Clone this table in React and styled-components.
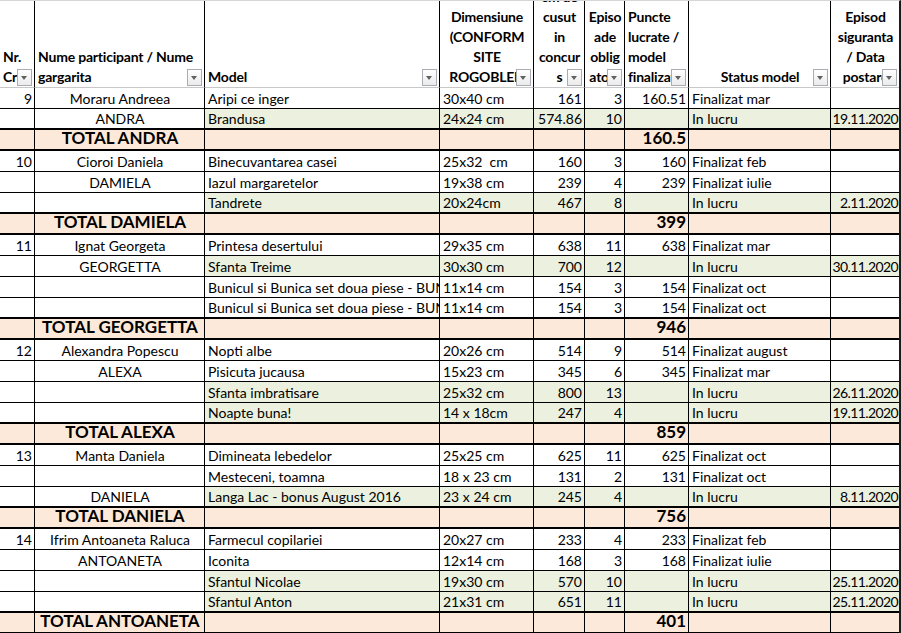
import React from 'react';
import styled, { createGlobalStyle } from 'styled-components';

const GREEN = '#ebf1de';
const PEACH = '#fde9d9';

const GlobalStyle = createGlobalStyle`
  body {
    margin: 0;
    background: #fff;
    font-family: Lato, "Liberation Sans", sans-serif;
    color: #000;
  }
`;

const Sheet = styled.div`
  width: 899px;
  border-top: 1px solid #d6d6d6;
  border-right: 2px solid #1c1c1c;
  overflow: hidden;
`;

const Table = styled.table`
  table-layout: fixed;
  border-collapse: separate;
  border-spacing: 0;
  width: 899px;
`;

const HeadCell = styled.th`
  position: relative;
  width: ${p => p.$w}px;
  box-sizing: border-box;
  padding: 0;
  border-right: ${p => (p.$last ? 'none' : '1px solid #000')};
  border-bottom: 1px solid #c8c8c8;
  vertical-align: bottom;
  font-weight: 700;
`;

const HeadBox = styled.div`
  height: 86px;
  overflow: hidden;
  display: flex;
  flex-direction: column;
  justify-content: flex-end;
  padding: 0 2px 0 3px;
  font-size: 14px;
  line-height: 20px;
  text-align: ${p => p.$align};
`;

const HeadLine = styled.span`
  display: block;
  white-space: nowrap;
  letter-spacing: -0.2px;
`;

const FilterButton = styled.span`
  position: absolute;
  right: 2px;
  bottom: 1px;
  width: 15px;
  height: 17px;
  box-sizing: border-box;
  border: 1px solid #a9adb3;
  background: linear-gradient(#ffffff, #ebebeb);

  &::after {
    content: '';
    position: absolute;
    left: 3px;
    top: 6px;
    border-left: 3.5px solid transparent;
    border-right: 3.5px solid transparent;
    border-top: 4px solid #606060;
  }
`;

const Cell = styled.td`
  padding: 0;
  box-sizing: border-box;
  border-right: ${p => (p.$last ? 'none' : '1px solid #000')};
  border-bottom: ${p => (p.$thick ? 2 : 1)}px solid #000;
  background: ${p => p.$fill || '#fff'};
  vertical-align: top;
`;

const CellBox = styled.div`
  height: ${p => p.$h}px;
  line-height: ${p => p.$h + 1}px;
  overflow: hidden;
  white-space: pre;
  padding: ${p => (p.$tight ? '0 1px 0 0' : '0 2px 0 3px')};
  font-size: 14px;
  letter-spacing: ${p => (p.$tight ? '-0.6px' : 'normal')};
  text-align: ${p => p.$align};
`;

const TotalBox = styled.div`
  height: 19px;
  line-height: 15px;
  white-space: nowrap;
  padding: 0 2px 0 3px;
  font-size: 17px;
  font-weight: 700;
  text-align: ${p => p.$align};
`;

const columns = [
  { w: 35, head: 'left', body: 'right', lines: ['Nr.', 'Crt.'] },
  { w: 170, head: 'left', body: 'center', lines: ['Nume participant / Nume', 'gargarita'] },
  { w: 235, head: 'left', body: 'left', lines: ['Model'] },
  { w: 94, head: 'center', body: 'left', lines: ['Dimensiune', '(CONFORM', 'SITE', 'ROGOBLEN'] },
  { w: 51, head: 'center', body: 'right', lines: ['cm de', 'cusut', 'in', 'concur', 's'] },
  { w: 40, head: 'center', body: 'right', lines: ['Episo', 'ade', 'oblig', 'atorii'] },
  { w: 64, head: 'left', body: 'right', lines: ['Puncte', 'lucrate /', 'model', 'finalizat'] },
  { w: 142, head: 'center', body: 'left', lines: ['Status model'] },
  { w: 68, head: 'center', body: 'right', tight: true, lines: ['Episod', 'siguranta', '/ Data', 'postare'] },
];

const BUNICI = 'Bunicul si Bunica set doua piese - BUNICUTII';

// [nr, nume, model, dimensiune, cm, episoade, puncte, status, data, in lucru]
const sections = [
  {
    label: 'TOTAL ANDRA',
    points: '160.5',
    rows: [
      ['9', 'Moraru Andreea', 'Aripi ce inger', '30x40 cm', '161', '3', '160.51', 'Finalizat mar', ''],
      ['', 'ANDRA', 'Brandusa', '24x24 cm', '574.86', '10', '', 'In lucru', '19.11.2020', true],
    ],
  },
  {
    label: 'TOTAL DAMIELA',
    points: '399',
    rows: [
      ['10', 'Cioroi Daniela', 'Binecuvantarea casei', '25x32  cm', '160', '3', '160', 'Finalizat feb', ''],
      ['', 'DAMIELA', 'Iazul margaretelor', '19x38 cm', '239', '4', '239', 'Finalizat iulie', ''],
      ['', '', 'Tandrete', '20x24cm', '467', '8', '', 'In lucru', '2.11.2020', true],
    ],
  },
  {
    label: 'TOTAL GEORGETTA',
    points: '946',
    rows: [
      ['11', 'Ignat Georgeta', 'Printesa desertului', '29x35 cm', '638', '11', '638', 'Finalizat mar', ''],
      ['', 'GEORGETTA', 'Sfanta Treime', '30x30 cm', '700', '12', '', 'In lucru', '30.11.2020', true],
      ['', '', BUNICI, '11x14 cm', '154', '3', '154', 'Finalizat oct', ''],
      ['', '', BUNICI, '11x14 cm', '154', '3', '154', 'Finalizat oct', ''],
    ],
  },
  {
    label: 'TOTAL ALEXA',
    points: '859',
    rows: [
      ['12', 'Alexandra Popescu', 'Nopti albe', '20x26 cm', '514', '9', '514', 'Finalizat august', ''],
      ['', 'ALEXA', 'Pisicuta jucausa', '15x23 cm', '345', '6', '345', 'Finalizat mar', ''],
      ['', '', 'Sfanta imbratisare', '25x32 cm', '800', '13', '', 'In lucru', '26.11.2020', true],
      ['', '', 'Noapte buna!', '14 x 18cm', '247', '4', '', 'In lucru', '19.11.2020', true],
    ],
  },
  {
    label: 'TOTAL DANIELA',
    points: '756',
    rows: [
      ['13', 'Manta Daniela', 'Dimineata lebedelor', '25x25 cm', '625', '11', '625', 'Finalizat oct', ''],
      ['', '', 'Mesteceni, toamna', '18 x 23 cm', '131', '2', '131', 'Finalizat oct', ''],
      ['', 'DANIELA', 'Langa Lac - bonus August 2016', '23 x 24 cm', '245', '4', '', 'In lucru', '8.11.2020', true],
    ],
  },
  {
    label: 'TOTAL ANTOANETA',
    points: '401',
    rows: [
      ['14', 'Ifrim Antoaneta Raluca', 'Farmecul copilariei', '20x27 cm', '233', '4', '233', 'Finalizat feb', ''],
      ['', 'ANTOANETA', 'Iconita', '12x14 cm', '168', '3', '168', 'Finalizat iulie', ''],
      ['', '', 'Sfantul Nicolae', '19x30 cm', '570', '10', '', 'In lucru', '25.11.2020', true],
      ['', '', 'Sfantul Anton', '21x31 cm', '651', '11', '', 'In lucru', '25.11.2020', true],
    ],
  },
];

const last = columns.length - 1;

const DataRow = ({ row, thick }) => (
  <tr>
    {columns.map((col, i) => (
      <Cell
        key={i}
        $last={i === last}
        $thick={thick}
        $fill={row[9] && i >= 2 ? GREEN : undefined}
      >
        <CellBox $h={thick ? 19 : 20} $align={col.body} $tight={col.tight}>
          {row[i]}
        </CellBox>
      </Cell>
    ))}
  </tr>
);

const TotalRow = ({ label, points }) => (
  <tr>
    {columns.map((col, i) => (
      <Cell key={i} $last={i === last} $thick $fill={PEACH}>
        <TotalBox $align={i === 1 ? 'center' : 'right'}>
          {i === 1 ? label : i === 6 ? points : ''}
        </TotalBox>
      </Cell>
    ))}
  </tr>
);

export default function App() {
  return (
    <>
      <GlobalStyle />
      <Sheet>
        <Table>
          <thead>
            <tr>
              {columns.map((col, i) => (
                <HeadCell key={i} $w={col.w} $last={i === last}>
                  <HeadBox $align={col.head}>
                    {col.lines.map(line => (
                      <HeadLine key={line}>{line}</HeadLine>
                    ))}
                  </HeadBox>
                  <FilterButton />
                </HeadCell>
              ))}
            </tr>
          </thead>
          <tbody>
            {sections.map(section => (
              <React.Fragment key={section.label}>
                {section.rows.map((row, r) => (
                  <DataRow key={r} row={row} thick={r === section.rows.length - 1} />
                ))}
                <TotalRow label={section.label} points={section.points} />
              </React.Fragment>
            ))}
          </tbody>
        </Table>
      </Sheet>
    </>
  );
}
